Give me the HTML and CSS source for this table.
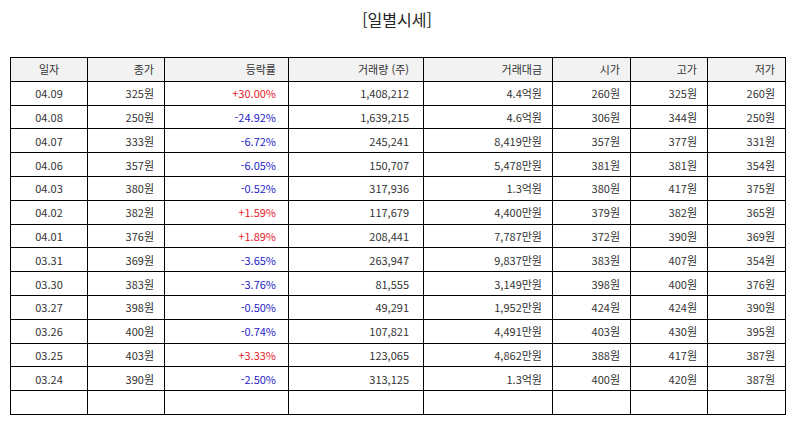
FILE: index.html
```html
<!DOCTYPE html>
<html lang="ko">
<head>
<meta charset="utf-8">
<link rel="stylesheet" href="styles.css">
</head>
<body>
<h1 class="title">[일별시세]</h1>
<table class="quotes">
  <colgroup>
    <col class="c-date"><col class="c-close"><col class="c-rate"><col class="c-vol"><col class="c-amt"><col class="c-open"><col class="c-high"><col class="c-low">
  </colgroup>
  <thead>
    <tr><th class="ctr">일자</th><th>종가</th><th>등락률</th><th>거래량 (주)</th><th>거래대금</th><th>시가</th><th>고가</th><th>저가</th></tr>
  </thead>
  <tbody>
    <tr><td class="ctr">04.09</td><td>325원</td><td class="up">+30.00%</td><td>1,408,212</td><td>4.4억원</td><td>260원</td><td>325원</td><td>260원</td></tr>
    <tr><td class="ctr">04.08</td><td>250원</td><td class="down">-24.92%</td><td>1,639,215</td><td>4.6억원</td><td>306원</td><td>344원</td><td>250원</td></tr>
    <tr><td class="ctr">04.07</td><td>333원</td><td class="down">-6.72%</td><td>245,241</td><td>8,419만원</td><td>357원</td><td>377원</td><td>331원</td></tr>
    <tr><td class="ctr">04.06</td><td>357원</td><td class="down">-6.05%</td><td>150,707</td><td>5,478만원</td><td>381원</td><td>381원</td><td>354원</td></tr>
    <tr><td class="ctr">04.03</td><td>380원</td><td class="down">-0.52%</td><td>317,936</td><td>1.3억원</td><td>380원</td><td>417원</td><td>375원</td></tr>
    <tr><td class="ctr">04.02</td><td>382원</td><td class="up">+1.59%</td><td>117,679</td><td>4,400만원</td><td>379원</td><td>382원</td><td>365원</td></tr>
    <tr><td class="ctr">04.01</td><td>376원</td><td class="up">+1.89%</td><td>208,441</td><td>7,787만원</td><td>372원</td><td>390원</td><td>369원</td></tr>
    <tr><td class="ctr">03.31</td><td>369원</td><td class="down">-3.65%</td><td>263,947</td><td>9,837만원</td><td>383원</td><td>407원</td><td>354원</td></tr>
    <tr><td class="ctr">03.30</td><td>383원</td><td class="down">-3.76%</td><td>81,555</td><td>3,149만원</td><td>398원</td><td>400원</td><td>376원</td></tr>
    <tr><td class="ctr">03.27</td><td>398원</td><td class="down">-0.50%</td><td>49,291</td><td>1,952만원</td><td>424원</td><td>424원</td><td>390원</td></tr>
    <tr><td class="ctr">03.26</td><td>400원</td><td class="down">-0.74%</td><td>107,821</td><td>4,491만원</td><td>403원</td><td>430원</td><td>395원</td></tr>
    <tr><td class="ctr">03.25</td><td>403원</td><td class="up">+3.33%</td><td>123,065</td><td>4,862만원</td><td>388원</td><td>417원</td><td>387원</td></tr>
    <tr><td class="ctr">03.24</td><td>390원</td><td class="down">-2.50%</td><td>313,125</td><td>1.3억원</td><td>400원</td><td>420원</td><td>387원</td></tr>
    <tr class="empty"><td></td><td></td><td></td><td></td><td></td><td></td><td></td><td></td></tr>
  </tbody>
</table>
</body>
</html>
```
FILE: styles.css
```css
html, body {
  margin: 0;
  padding: 0;
  background: #fff;
}
body {
  font-family: "Noto Sans CJK KR", "Noto Sans", sans-serif;
  color: #333;
}
.title {
  margin: 7px 0 0 0;
  height: 50px;
  font-size: 16px;
  font-weight: normal;
  line-height: 24px;
  text-align: center;
  color: #222;
}
.quotes {
  margin-left: 10px;
  border-collapse: collapse;
  table-layout: fixed;
  width: 776px;
  font-size: 11px;
}
.c-date { width: 77px; }
.c-close { width: 77px; }
.c-rate { width: 124px; }
.c-vol { width: 135px; }
.c-amt { width: 129px; }
.c-open { width: 78px; }
.c-high { width: 77px; }
.c-low { width: 78px; }
.quotes tr {
  height: 23.8px;
}
.quotes th, .quotes td {
  border: 1px solid #000;
  padding: 0 10px 0 4px;
  text-align: right;
  font-weight: normal;
  white-space: nowrap;
  line-height: 14px;
}
.quotes th:nth-child(3), .quotes td:nth-child(3) {
  padding-right: 12px;
}
.quotes th:nth-child(4), .quotes td:nth-child(4) {
  padding-right: 14px;
}
.quotes th {
  background: #f2f2f2;
}
.quotes th.ctr, .quotes td.ctr {
  text-align: center;
  padding: 0;
}
.quotes td.up { color: #e8192c; }
.quotes td.down { color: #2323c8; }
```
